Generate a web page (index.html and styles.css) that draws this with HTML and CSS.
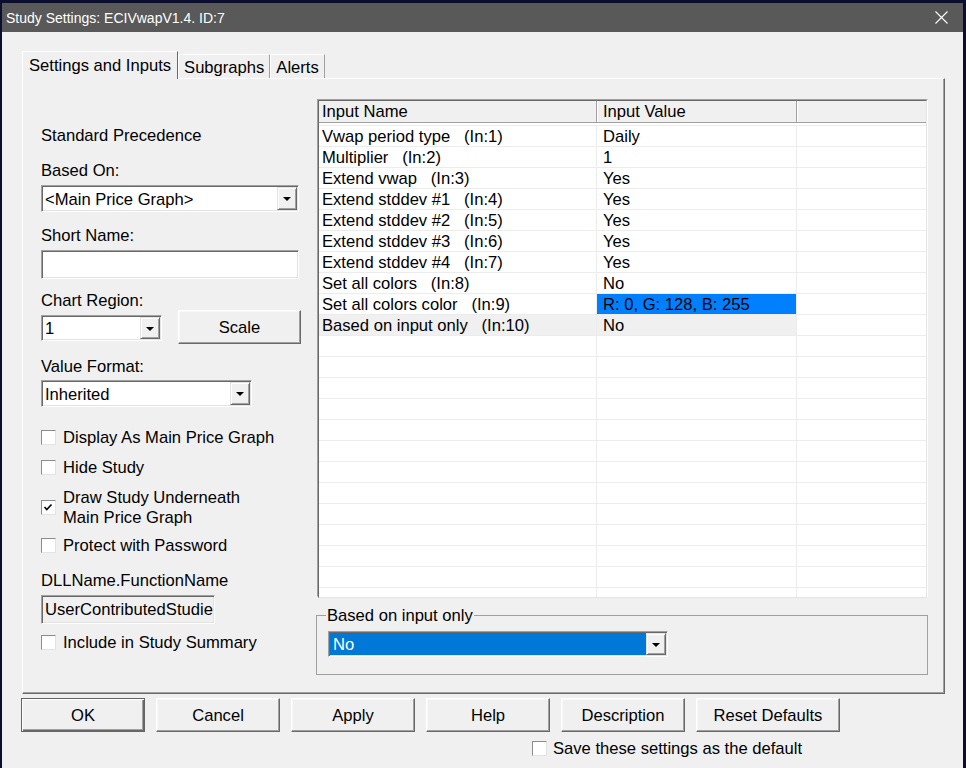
FILE: index.html
```html
<!DOCTYPE html>
<html lang="en">
<head>
  <meta charset="UTF-8">
  <title>Study Settings</title>
  <link rel="stylesheet" href="styles.css">
</head>
<body>
  <div class="dialog">
    <div class="titlebar">
      <span>Study Settings: ECIVwapV1.4. ID:7</span>
      <svg class="close" width="13" height="13" viewBox="0 0 13 13">
        <path d="M0.5 0.5 L12.5 12.5 M12.5 0.5 L0.5 12.5" stroke="#fff" stroke-width="1.1" fill="none"/>
      </svg>
    </div>

    <div class="content">
      <div class="tabs">
        <div class="tab active">Settings and Inputs</div>
        <div class="tab">Subgraphs</div>
        <div class="tab">Alerts</div>
      </div>

      <div class="panel">
        <!-- colonne gauche -->
        <div class="left">
          <div class="lbl">Standard Precedence</div>
          <div class="lbl mt15">Based On:</div>
          <div class="combo based">
            <span class="combo-text">&lt;Main Price Graph&gt;</span>
            <span class="drop"></span>
          </div>
          <div class="lbl mt13">Short Name:</div>
          <div class="field short"></div>
          <div class="lbl mt11">Chart Region:</div>
          <div class="region-row">
            <div class="combo region">
              <span class="combo-text">1</span>
              <span class="drop"></span>
            </div>
            <div class="btn scale">Scale</div>
          </div>
          <div class="lbl mt12">Value Format:</div>
          <div class="combo format">
            <span class="combo-text">Inherited</span>
            <span class="drop"></span>
          </div>

          <div class="check first"><span class="box"></span><span class="txt">Display As Main Price Graph</span></div>
          <div class="check"><span class="box"></span><span class="txt">Hide Study</span></div>
          <div class="check"><span class="box"><svg width="13" height="13" viewBox="0 0 13 13"><path d="M2.5 6 L4.8 8.5 L9.5 3.5" stroke="#000" stroke-width="1.6" fill="none"/></svg></span><span class="txt">Draw Study Underneath<br>Main Price Graph</span></div>
          <div class="check mt8"><span class="box"></span><span class="txt">Protect with Password</span></div>
          <div class="lbl mt15">DLLName.FunctionName</div>
          <div class="field dll">UserContributedStudie</div>
          <div class="check mt8"><span class="box"></span><span class="txt">Include in Study Summary</span></div>
        </div>

        <!-- colonne droite -->
        <div class="right">
          <div class="grid">
            <div class="grid-inner">
              <div class="grid-head">
                <div class="hcell">Input Name</div>
                <div class="hcell">Input Value</div>
                <div class="hcell last"></div>
              </div>
              <div class="grid-body" id="grid-body"></div>
            </div>
          </div>

          <fieldset class="group">
            <legend>Based on input only</legend>
            <div class="combo choice">
              <span class="combo-text selected">No</span>
              <span class="drop"></span>
            </div>
          </fieldset>
        </div>
      </div>

      <div class="buttons">
        <div class="btn default">OK</div>
        <div class="btn">Cancel</div>
        <div class="btn">Apply</div>
        <div class="btn">Help</div>
        <div class="btn">Description</div>
        <div class="btn reset">Reset Defaults</div>
      </div>

      <div class="check save"><span class="box"></span><span class="txt">Save these settings as the default</span></div>
    </div>
  </div>

  <script>
    const inputs = [
      ["Vwap period type   (In:1)", "Daily"],
      ["Multiplier   (In:2)", "1"],
      ["Extend vwap   (In:3)", "Yes"],
      ["Extend stddev #1   (In:4)", "Yes"],
      ["Extend stddev #2   (In:5)", "Yes"],
      ["Extend stddev #3   (In:6)", "Yes"],
      ["Extend stddev #4   (In:7)", "Yes"],
      ["Set all colors   (In:8)", "No"],
      ["Set all colors color   (In:9)", "R: 0, G: 128, B: 255"],
      ["Based on input only   (In:10)", "No"]
    ];

    const body = document.getElementById("grid-body");
    for (let i = 0; i < 23; i++) {
      const [name, value] = inputs[i] || ["", ""];
      const row = document.createElement("div");
      row.className = "grid-row";
      if (i === 9) row.className += " current";
      row.innerHTML = `
        <div class="cell">${name}</div>
        <div class="cell${i === 8 ? " color" : ""}">${value}</div>
        <div class="cell last"></div>
      `;
      body.appendChild(row);
    }
  </script>
</body>
</html>
```

FILE: styles.css
```css
/* Styles généraux */
body {
  margin: 0;
  background-color: #0b0e2c;
  font-family: "Liberation Sans", Arial, sans-serif;
  font-size: 16.6px;
  color: #000;
}

.dialog {
  margin: 3px 0 0 2px;
  width: 961px;
  height: 765px;
  background-color: #f0f0f0;
  overflow: hidden;
}

.titlebar {
  height: 29px;
  display: flex;
  align-items: center;
  justify-content: space-between;
  padding: 0 15px 0 4px;
  background-color: #595959;
  color: #fff;
  font-size: 14px;
}

.content {
  padding: 19px 0 0 20px;
}

/* Onglets */
.tabs {
  display: flex;
  align-items: flex-end;
  height: 27px;
}

.tab {
  box-sizing: border-box;
  height: 24px;
  line-height: 23px;
  padding: 1px 5px 0;
  border: 1px solid;
  border-color: #fff #a0a0a0 transparent #fff;
  border-bottom: none;
}

.tab.active {
  position: relative;
  z-index: 1;
  height: 28px;
  line-height: 26px;
  margin-bottom: -1px;
  padding: 1px 6px 0;
  background-color: #f0f0f0;
  border-right-color: #696969;
}

.panel {
  box-sizing: border-box;
  width: 923px;
  height: 616px;
  display: flex;
  border: 1px solid;
  border-color: #fff #696969 #696969 #fff;
  box-shadow: inset -1px -1px 0 #a0a0a0;
}

.left {
  box-sizing: border-box;
  width: 294px;
  padding: 46px 0 0 18px;
}

.right {
  padding-top: 20px;
}

.lbl {
  height: 20px;
  line-height: 20px;
  padding-top: 1px;
  margin-bottom: -1px;
  white-space: nowrap;
}

/* Listes déroulantes et champs */
.combo {
  box-sizing: border-box;
  display: flex;
  padding: 1px;
  border: 1px solid;
  border-color: #a0a0a0 #fff #fff #a0a0a0;
  box-shadow: inset 1px 1px 0 #696969, inset -1px -1px 0 #e3e3e3;
  background-color: #fff;
}

.combo-text {
  flex: 1;
  padding: 2px 0 0 2px;
  display: flex;
  align-items: center;
  white-space: nowrap;
  overflow: hidden;
}

.combo-text.selected {
  background-color: #0078d7;
  color: #fff;
  padding-left: 3px;
}

.drop {
  box-sizing: border-box;
  width: 20px;
  display: flex;
  align-items: center;
  justify-content: center;
  border: 1px solid;
  border-color: #e3e3e3 #696969 #696969 #e3e3e3;
  box-shadow: inset 1px 1px 0 #fff, inset -1px -1px 0 #a0a0a0;
  background-color: #f0f0f0;
}

.drop::after {
  content: "";
  border-left: 4px solid transparent;
  border-right: 4px solid transparent;
  border-top: 4px solid #000;
  margin-top: 1px;
}

.based {
  margin-top: 5px;
  width: 258px;
  height: 27px;
}

.region-row {
  display: flex;
  align-items: flex-start;
  height: 34px;
}

.region {
  margin-top: 5px;
  width: 121px;
  height: 26px;
}

.format {
  margin-top: 4px;
  width: 211px;
  height: 27px;
}

.field {
  box-sizing: border-box;
  height: 29px;
  padding: 1px 3px 0;
  line-height: 25px;
  border: 1px solid;
  border-color: #a0a0a0 #fff #fff #a0a0a0;
  box-shadow: inset 1px 1px 0 #696969, inset -1px -1px 0 #e3e3e3;
  background-color: #fff;
  white-space: nowrap;
  overflow: hidden;
}

.short {
  margin-top: 5px;
  width: 258px;
}

.dll {
  margin-top: 5px;
  width: 174px;
  background-color: #f0f0f0;
}

/* Boutons */
.btn {
  box-sizing: border-box;
  height: 34px;
  padding-top: 2px;
  display: flex;
  align-items: center;
  justify-content: center;
  border: 1px solid;
  border-color: #fff #696969 #696969 #fff;
  box-shadow: inset -1px -1px 0 #a0a0a0, inset 1px 1px 0 #f8f8f8;
  background-color: #f0f0f0;
  white-space: nowrap;
}

.scale {
  margin-left: 16px;
  width: 123px;
}

.buttons {
  display: flex;
  gap: 11px;
  margin: 4px 0 0 -1px;
}

.buttons .btn {
  width: 124px;
}

.buttons .reset {
  width: 144px;
}

.btn.default {
  border-color: #646464;
  box-shadow: inset 1px 1px 0 #fff, inset -1px -1px 0 #696969, inset -2px -2px 0 #a0a0a0;
}

/* Cases à cocher */
.check {
  display: flex;
  align-items: center;
  margin-top: 10px;
  min-height: 20px;
  line-height: 20px;
  white-space: nowrap;
}

.check .txt {
  padding-top: 1px;
  margin-bottom: -1px;
}

.check.first {
  margin-top: 20px;
}

.box {
  box-sizing: border-box;
  flex: none;
  width: 15px;
  height: 15px;
  margin-right: 7px;
  display: flex;
  align-items: center;
  justify-content: center;
  border: 1px solid;
  border-color: #8c8c8c #e3e3e3 #e3e3e3 #8c8c8c;
  background-color: #fff;
}

.save {
  margin: 6px 0 0 510px;
}

.save .box {
  margin-right: 6px;
}

/* Marges verticales */
.mt8 { margin-top: 8px; }
.mt11 { margin-top: 11px; }
.mt12 { margin-top: 12px; }
.mt13 { margin-top: 13px; }
.mt15 { margin-top: 15px; }

/* Tableau des entrées */
.grid {
  box-sizing: border-box;
  width: 611px;
  height: 498px;
  border: 1px solid;
  border-color: #a0a0a0 #fff #fff #a0a0a0;
}

.grid-inner {
  height: 100%;
  overflow: hidden;
  border: 1px solid;
  border-color: #696969 #e3e3e3 #e3e3e3 #696969;
  background-color: #fff;
}

.grid-head {
  display: grid;
  grid-template-columns: 278px 200px 1fr;
  height: 21px;
  border-bottom: 1px solid #a0a0a0;
  background-color: #f0f0f0;
  margin-bottom: 2px;
}

.hcell {
  box-sizing: border-box;
  padding: 1px 0 0 3px;
  line-height: 20px;
  border-right: 1px solid #a0a0a0;
  box-shadow: 1px 0 0 #fff;
}

.hcell + .hcell {
  padding-left: 6px;
}

.hcell.last {
  border-right: none;
  box-shadow: none;
}

.grid-row {
  display: grid;
  grid-template-columns: 278px 200px 1fr;
  height: 21px;
  box-sizing: border-box;
  border-top: 1px solid #ececec;
}

.cell {
  box-sizing: border-box;
  padding: 1px 0 0 3px;
  line-height: 19px;
  white-space: pre;
  border-right: 1px solid #ececec;
}

.cell + .cell {
  padding-left: 6px;
}

.cell.last {
  border-right: none;
}

.cell.color {
  background-color: #0080ff;
}

.grid-row.current .cell {
  background-color: #f0f0f0;
}

.grid-row.current .cell.last {
  background-color: #fff;
}

/* Cadre "Based on input only" */
.group {
  box-sizing: border-box;
  width: 612px;
  margin: 8px 0 0 -1px;
  padding: 5px 11px 17px 11px;
  border: 1px solid #a0a0a0;
}

.group legend {
  padding: 1px 1px 0;
  margin-left: -2px;
  line-height: 20px;
}

.choice {
  width: 340px;
  height: 26px;
}
```
